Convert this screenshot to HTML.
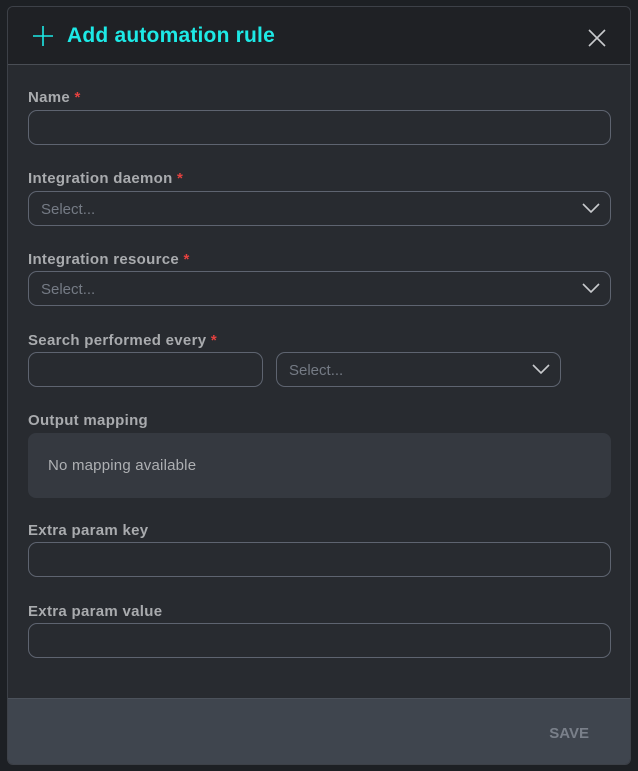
<!DOCTYPE html>
<html><head><style>
*{box-sizing:border-box;margin:0;padding:0}
body{width:638px;height:771px;background:#1d2024;position:relative;overflow:hidden;font-family:"Liberation Sans",Arial,sans-serif}
.modal{position:absolute;left:7px;top:6px;width:624px;height:759px;background:#282b30;border:1px solid #3d4148;border-radius:6px;overflow:hidden}
.hdr{position:absolute;left:0;top:0;width:100%;height:58px;background:#1f2125;border-bottom:1px solid #4a4e55}
.title{position:absolute;left:59px;top:17px;color:#1de9e6;font-size:21px;font-weight:bold;letter-spacing:0.2px}
.lbl{position:absolute;left:20px;color:#a9abae;font-size:15px;font-weight:bold;letter-spacing:0.3px}
.lbl b{color:#e5413f}
.in{position:absolute;left:20px;width:583px;height:35px;border:1px solid #5e6470;border-radius:9px}
.ph{position:absolute;left:12px;top:9px;color:#757b85;font-size:15px}
.ch{position:absolute;right:10px;top:10px}
.map{position:absolute;left:20px;top:426px;width:583px;height:65px;background:#353940;border-radius:8px;color:#aeb0b3;font-size:15px;padding:24px 0 0 20px;letter-spacing:0.2px}
.ftr{position:absolute;left:0;bottom:0;width:100%;height:66px;background:#3f454e;border-top:1px solid #4c525b}
.save{position:absolute;right:41px;top:26px;color:#7a808a;font-size:15px;font-weight:bold}
</style></head><body>
<div class="modal">
<div class="hdr">
<svg style="position:absolute;left:24px;top:18px" width="22" height="22"><path d="M11 1V21M1 11H21" stroke="#1de9e6" stroke-width="1.6"/></svg>
<div class="title">Add automation rule</div>
<svg style="position:absolute;left:580px;top:22px" width="18" height="18"><path d="M1 1L17 17M17 1L1 17" stroke="#c8cacd" stroke-width="1.6"/></svg>
</div>
<div class="lbl" style="top:82px">Name <b>*</b></div>
<div class="in" style="top:103px"></div>
<div class="lbl" style="top:163px">Integration daemon <b>*</b></div>
<div class="in" style="top:184px"><span class="ph">Select...</span><svg class="ch" width="18" height="12"><path d="M1 2L9 10L17 2" stroke="#c8cacd" stroke-width="1.6" fill="none"/></svg></div>
<div class="lbl" style="top:244px">Integration resource <b>*</b></div>
<div class="in" style="top:264px"><span class="ph">Select...</span><svg class="ch" width="18" height="12"><path d="M1 2L9 10L17 2" stroke="#c8cacd" stroke-width="1.6" fill="none"/></svg></div>
<div class="lbl" style="top:325px">Search performed every <b>*</b></div>
<div class="in" style="top:345px;width:235px"></div>
<div class="in" style="top:345px;left:268px;width:285px"><span class="ph">Select...</span><svg class="ch" width="18" height="12"><path d="M1 2L9 10L17 2" stroke="#c8cacd" stroke-width="1.6" fill="none"/></svg></div>
<div class="lbl" style="top:405px">Output mapping</div>
<div class="map">No mapping available</div>
<div class="lbl" style="top:515px">Extra param key</div>
<div class="in" style="top:535px"></div>
<div class="lbl" style="top:596px">Extra param value</div>
<div class="in" style="top:616px"></div>
<div class="ftr"><div class="save">SAVE</div></div>
</div>
</body></html>
